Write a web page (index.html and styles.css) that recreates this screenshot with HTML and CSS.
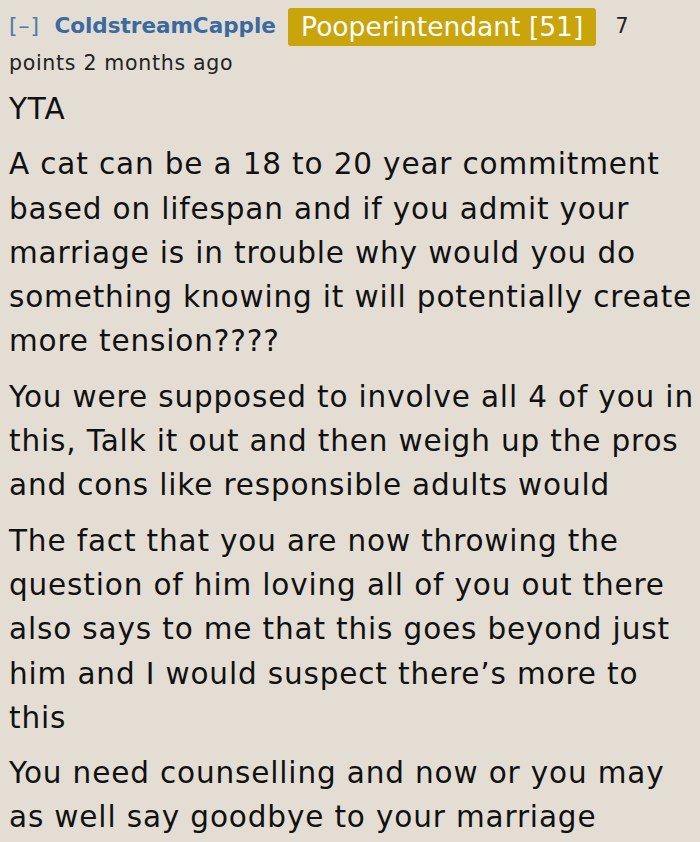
FILE: index.html
```html
<!DOCTYPE html>
<html>
<head>
<meta charset="utf-8">
<link rel="stylesheet" href="styles.css">
</head>
<body>
<div class="comment">
  <div class="tagline">
    <span class="expand">[–]</span>
    <span class="author">ColdstreamCapple</span>
    <span class="flair">Pooperintendant [51]</span>
    <span class="score">7 points</span>
    <span class="time">2 months ago</span>
  </div>
  <div class="body">
    <p>YTA</p>
    <p>A cat can be a 18 to 20 year commitment based on lifespan and if you admit your marriage is in trouble why would you do something knowing it will potentially create more tension????</p>
    <p>You were supposed to involve all 4 of you in this, Talk it out and then weigh up the pros and cons like responsible adults would</p>
    <p>The fact that you are now throwing the question of him loving all of you out there also says to me that this goes beyond just him and I would suspect there’s more to this</p>
    <p>You need counselling and now or you may as well say goodbye to your marriage</p>
  </div>
</div>
</body>
</html>
```

FILE: styles.css
```css
html, body {
  margin: 0;
  padding: 0;
  background: #e3ddd4;
}
body {
  font-family: "DejaVu Sans", Verdana, sans-serif;
  color: #111;
  width: 700px;
  height: 842px;
  overflow: hidden;
}
.comment {
  padding: 8px 0 0 9px;
}
.tagline {
  font-size: 20.5px;
  line-height: 34px;
  color: #222;
  width: 640px;
  letter-spacing: 0.7px;
}
.expand {
  color: #4f79a8;
  font-size: 22px;
  letter-spacing: 1px;
  margin-right: 7px;
}
.author {
  color: #3a6a9e;
  font-weight: bold;
  font-size: 21.5px;
  letter-spacing: 0;
  margin-right: 5px;
}
.flair {
  display: inline-block;
  vertical-align: middle;
  background: #c9a40a;
  color: #fff;
  font-size: 26.5px;
  line-height: 38px;
  padding: 0 13px;
  border-radius: 3px;
  margin-right: 12px;
  letter-spacing: 0;
}
.body {
  font-size: 29.5px;
  line-height: 44.3px;
  margin-top: 7px;
  width: 690px;
  letter-spacing: 0.85px;
}
.body p {
  margin: 0 0 11px 0;
}
```
